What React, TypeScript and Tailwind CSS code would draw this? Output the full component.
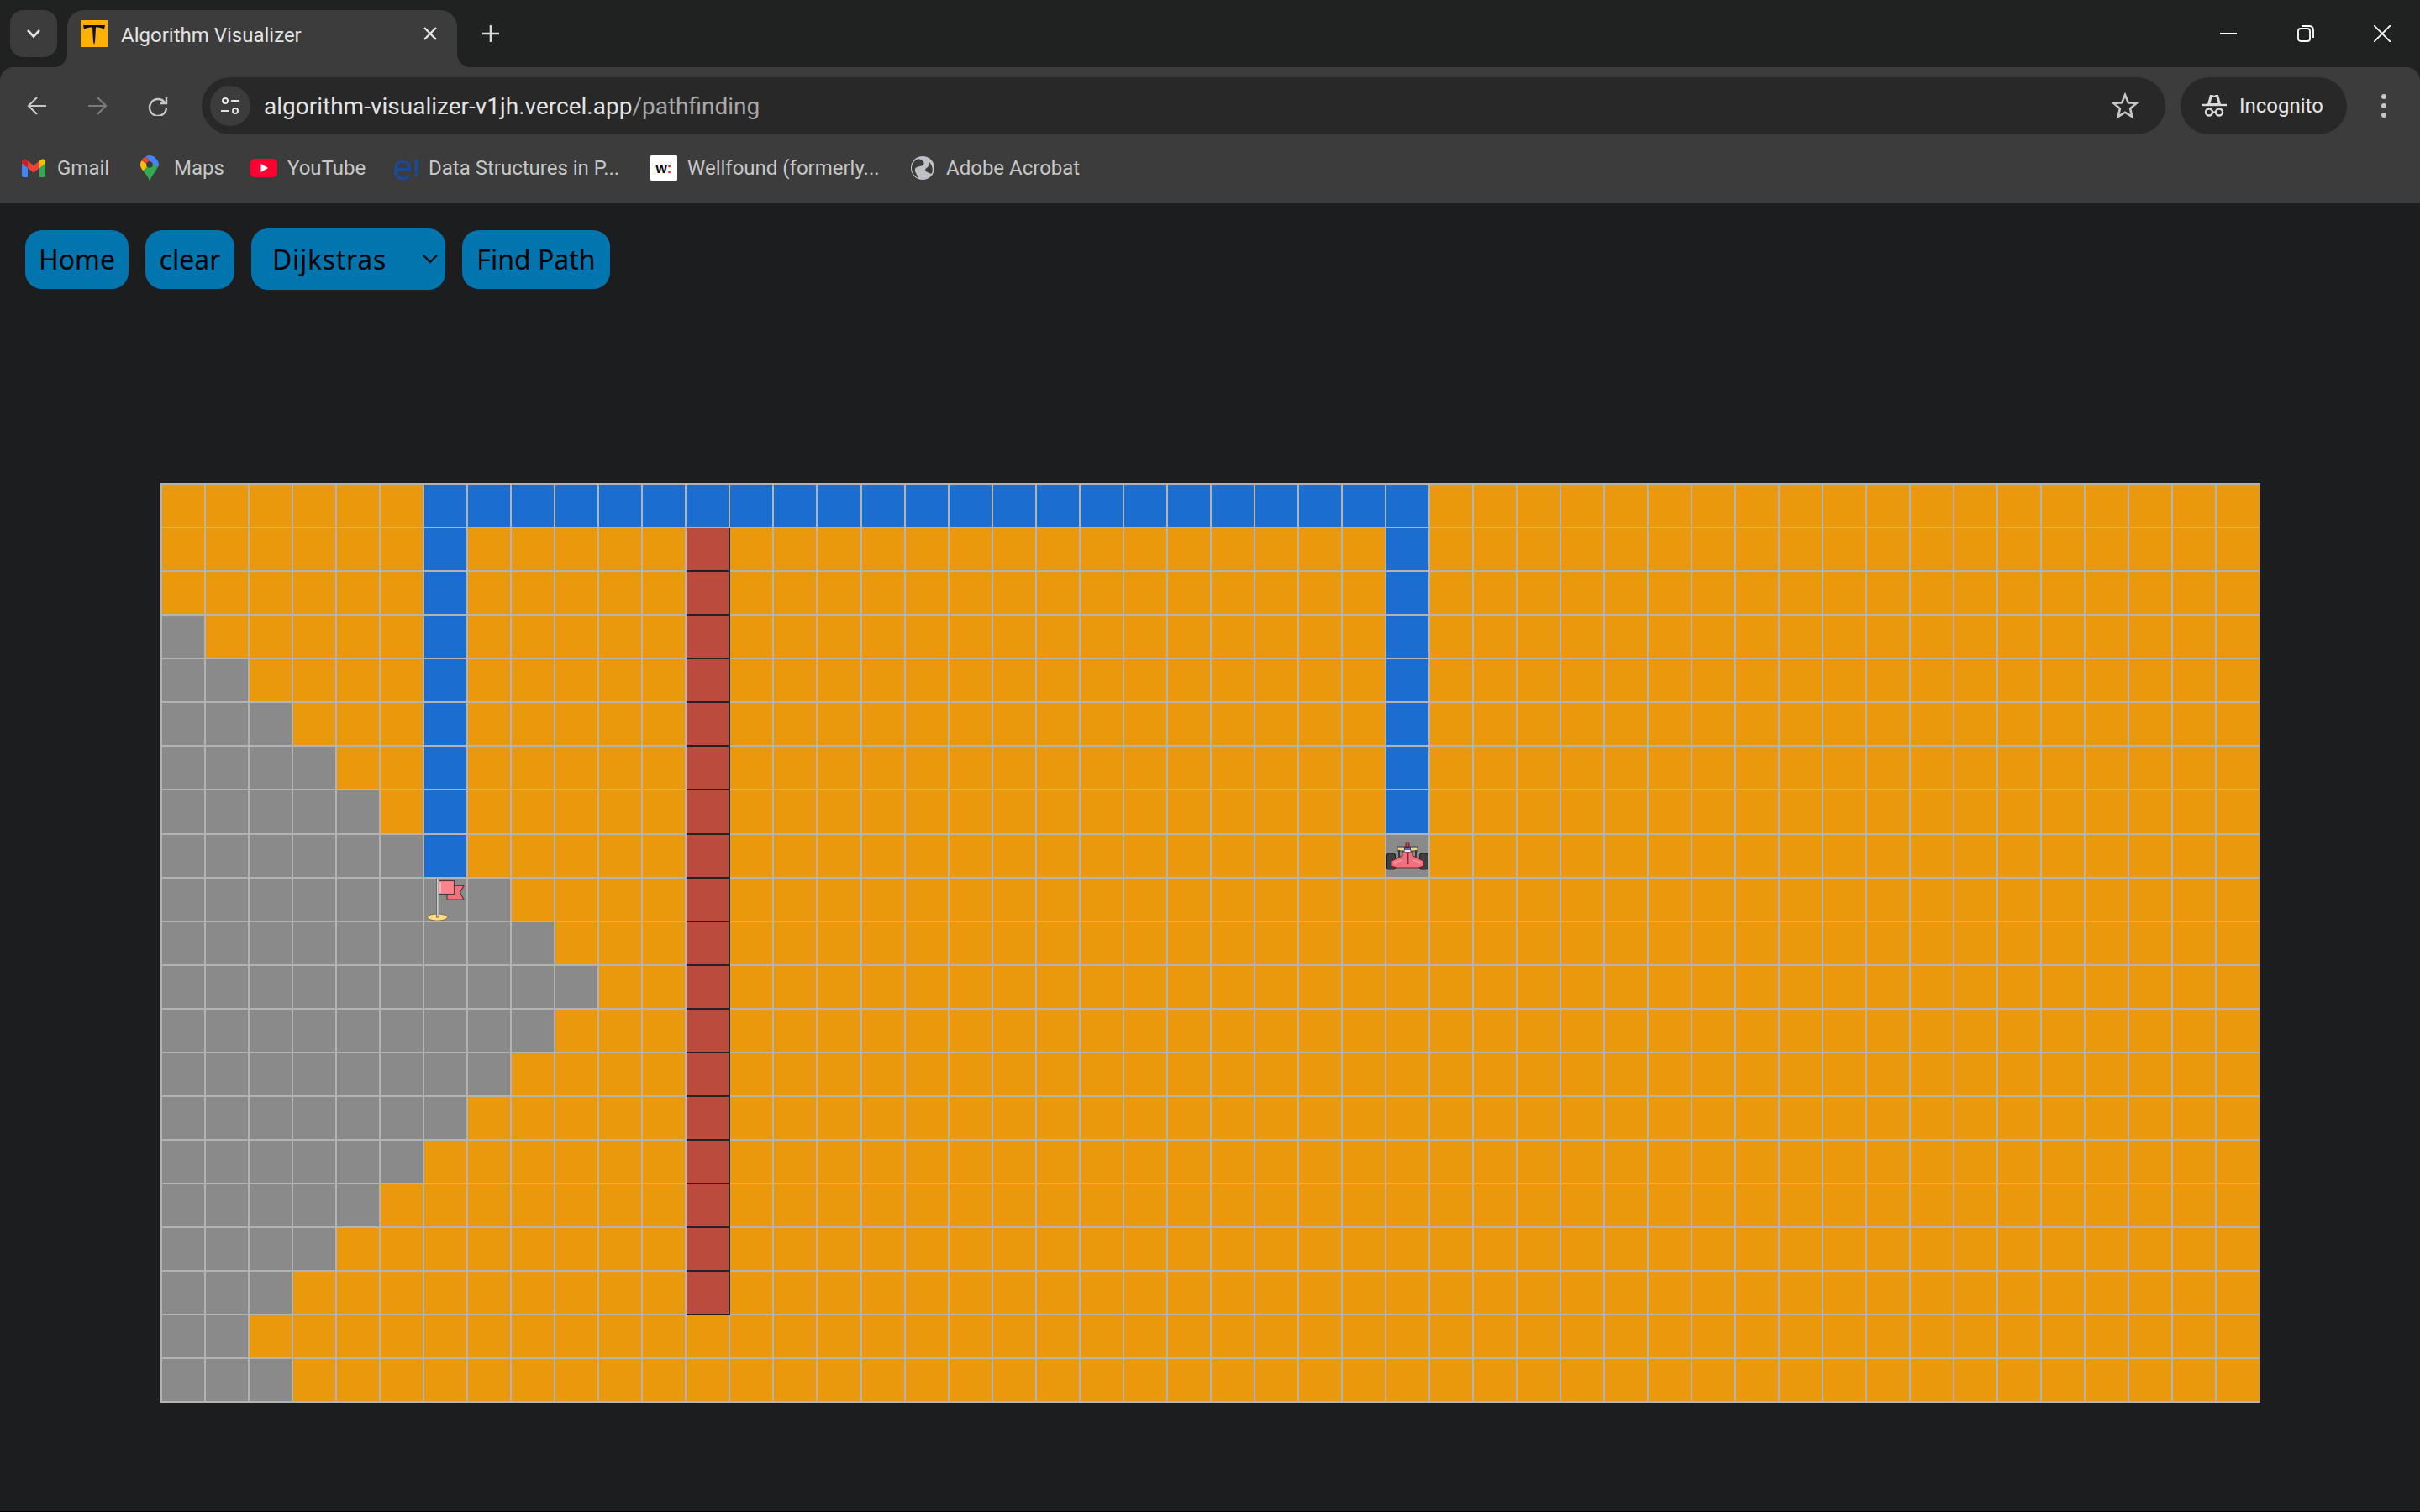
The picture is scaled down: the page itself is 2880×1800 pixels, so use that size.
import React from "react";

const GRAY_COUNT = [0, 0, 0, 1, 2, 3, 4, 5, 6, 8, 9, 10, 9, 8, 7, 6, 5, 4, 3, 2, 3];

function cellClass(r: number, c: number) {
  if (c === 12 && r >= 1 && r <= 18)
    return "bg-[#bb4b3c] shadow-[2px_0_0_#222,0_2px_0_#222,2px_2px_0_#222]";
  if (r === 0 && c >= 6 && c <= 28) return "bg-[#1b6dd0]";
  if (c === 6 && r >= 1 && r <= 8) return "bg-[#1b6dd0]";
  if (c === 28 && r >= 1 && r <= 7) return "bg-[#1b6dd0]";
  if (c === 28 && r === 8) return "bg-[#8a8a8a]";
  if (c < GRAY_COUNT[r]) return "bg-[#8a8a8a]";
  return "bg-[#ea990d]";
}

function Flag() {
  return (
    <svg viewBox="0 0 50 50" className="block h-full w-full">
      <path d="M27 8.5H47L42.5 16.5L47 25H27Z" fill="#f0707c" stroke="#5c3a40" strokeWidth="1.2" />
      <rect x="17" y="2.5" width="18.5" height="16" fill="#ff848c" stroke="#4e3a3e" strokeWidth="1.2" />
      <rect x="18" y="4" width="2" height="13" fill="#ffb0b4" />
      <ellipse cx="15.5" cy="46" rx="12" ry="4" fill="#fbdc80" stroke="#6a6048" strokeWidth="0.8" />
      <rect x="14.5" y="0.5" width="2.6" height="45.5" fill="#c9d0d2" stroke="#4b4f52" strokeWidth="0.7" />
    </svg>
  );
}

function Car() {
  return (
    <svg viewBox="0 0 50 50" className="block h-full w-full">
      <rect x="13" y="14" width="24" height="5" fill="#e6d38a" stroke="#3a3a3a" strokeWidth="1" />
      <rect x="14" y="18" width="2" height="8" fill="#3a3a3a" />
      <rect x="34" y="18" width="2" height="8" fill="#3a3a3a" />
      <rect x="0.5" y="22" width="10" height="19" rx="2.5" fill="#3d3d42" stroke="#1f1f22" strokeWidth="1" />
      <rect x="39.5" y="22" width="10" height="19" rx="2.5" fill="#3d3d42" stroke="#1f1f22" strokeWidth="1" />
      <path d="M6 31L12 28L19 25L19 20H31L31 25L38 28L44 31V37L38 39H31L28 39H22L19 39H12L6 37Z" fill="#f2707e" stroke="#5a2a34" strokeWidth="1" />
      <rect x="21.5" y="14.5" width="7" height="5" fill="#5a68b4" stroke="#2c2c48" strokeWidth="0.8" />
      <rect x="21.5" y="18" width="7" height="2" fill="#e9e9f2" />
      <rect x="23" y="9" width="4" height="5" fill="#c8404c" stroke="#3a2024" strokeWidth="0.8" />
      <path d="M24 22H26.5V35H24Z" fill="#8c2c3c" />
      <path d="M9 33L19 30M41 33L31 30" stroke="#ffa8b0" strokeWidth="1" fill="none" />
    </svg>
  );
}

const bookmarks = [
  { label: "Gmail", w: "w-[141px] gap-[14px]" },
  { label: "Maps", w: "w-[131px] gap-[18px]" },
  { label: "YouTube", w: "w-[170px] gap-[12px]" },
  { label: "Data Structures in P...", w: "w-[306px] gap-[13px]" },
  { label: "Wellfound (formerly...", w: "w-[310px] gap-[12px]" },
  { label: "Adobe Acrobat", w: "w-[220px] gap-[14px]" },
];

function BookmarkIcon({ i }: { i: number }) {
  if (i === 0)
    return (
      <svg viewBox="0 0 28 22" className="h-[22px] w-[28px]">
        <path d="M0 3.5C0 1 3 -.5 5 1L7 2.5V22H2C1 22 0 21 0 20Z" fill="#4285f4" />
        <path d="M28 3.5C28 1 25 -.5 23 1L21 2.5V22H26C27 22 28 21 28 20Z" fill="#34a853" />
        <path d="M7 2.5L14 8L21 2.5V11L14 16.5L7 11Z" fill="#ea4335" />
        <path d="M0 3.5C0 1 3 -.5 5 1L7 2.5V11L0 5.5Z" fill="#c5221f" />
        <path d="M28 3.5C28 1 25 -.5 23 1L21 2.5V11L28 5.5Z" fill="#fbbc04" />
      </svg>
    );
  if (i === 1)
    return (
      <svg viewBox="0 0 22 31" className="h-[31px] w-[22px]">
        <path d="M11 31C9.5 25 6 22 3 18L14 7L21 12C21 17 13 24 11 31Z" fill="#34a853" />
        <path d="M3 18C1 15.5 0 13.5 0 11C0 9 .6 7.5 1.6 6L9 11L7 15Z" fill="#fbbc04" />
        <path d="M1.6 6C2.6 4 4.5 2.4 6.5 1.5L11 6.5L8 9.5Z" fill="#ea4335" />
        <path d="M6.5 1.5C8 .6 9.4 0 11 0C14 0 16.8 1.4 18.5 3.4L13 8.5Z" fill="#4285f4" />
        <path d="M18.5 3.4C20.5 5.5 22 8 22 11C22 12 21.7 13 21 14L13 8.5Z" fill="#4285f4" />
        <circle cx="11" cy="11" r="3.8" fill="#3c3c3c" />
      </svg>
    );
  if (i === 2)
    return (
      <svg viewBox="0 0 32 22" className="h-[22px] w-[32px]">
        <rect width="32" height="22" rx="5" fill="#ff0033" />
        <path d="M12.5 6L21 11L12.5 16Z" fill="#fff" />
      </svg>
    );
  if (i === 3)
    return (
      <span className="flex h-[30px] w-[29px] items-end font-['Liberation_Sans',sans-serif] text-[42px] leading-[30px] text-[#174a9c]">
        e<span className="text-[30px] font-bold leading-[30px]">!</span>
      </span>
    );
  if (i === 4)
    return (
      <span className="flex h-8 w-8 items-center justify-center rounded-[3px] bg-white font-['Liberation_Sans',sans-serif] text-[17px] font-bold leading-none text-black">
        w<span className="text-[#e0242c]">:</span>
      </span>
    );
  return (
    <svg viewBox="0 0 28 28" className="h-7 w-7">
      <circle cx="14" cy="14" r="14" fill="#bdc1c6" />
      <path d="M9 3C14 5 17 7 15 10C13 13 7 11 5 15C4 18 7 21 9 26C5 24 1 20 1 14C1 9 4 5 9 3Z" fill="#3c3c3c" />
      <path d="M21 6C25 10 27 15 25 20C23 22 20 19 18 18C16 16 18 14 20 13C22 11 21 8 21 6Z" fill="#3c3c3c" />
    </svg>
  );
}

export default function App() {
  const rows = Array.from({ length: 21 }, (_, r) => r);
  const cols = Array.from({ length: 48 }, (_, c) => c);
  return (
    <div className="flex h-[1800px] w-[2880px] flex-col overflow-hidden border-b border-black bg-[#1c1d1f] font-['Roboto','Liberation_Sans',sans-serif]">
      <div className="bg-[#202222]">
        {/* Tab strip */}
        <div className="flex h-20 items-start pl-3 pt-3">
          <div className="flex h-14 w-14 items-center justify-center rounded-2xl bg-[#3c3c3c]">
            <svg viewBox="0 0 24 24" className="h-6 w-6" fill="none" stroke="#e3e3e3" strokeWidth="2.6">
              <path d="M5 8L12 15.5L19 8" />
            </svg>
          </div>
          <div className="relative ml-3 flex h-[68px] w-[464px] items-start rounded-t-[20px] bg-[#3c3c3c] pl-4 pt-3">
            <svg viewBox="0 0 16 16" className="absolute bottom-0 -left-4 h-4 w-4">
              <path d="M16 0V16H0C9 16 16 9 16 0Z" fill="#3c3c3c" />
            </svg>
            <svg viewBox="0 0 16 16" className="absolute -right-4 bottom-0 h-4 w-4">
              <path d="M0 0V16H16C7 16 0 9 0 0Z" fill="#3c3c3c" />
            </svg>
            <svg viewBox="0 0 32 32" className="h-8 w-8">
              <rect width="32" height="32" fill="#ffb000" />
              <path d="M3 6H29L28 11C25 9 22 8.5 18 8.5L17 26L16 29L15 26L14 8.5C10 8.5 7 9 4 11Z" fill="#111" />
            </svg>
            <span className="ml-4 mt-[2px] w-[358px] text-[24px] leading-8 text-[#e3e3e3]">Algorithm Visualizer</span>
            <svg viewBox="0 0 20 20" className="mt-[6px] h-5 w-5" fill="none" stroke="#e3e3e3" strokeWidth="2.4">
              <path d="M3 3L17 17M17 3L3 17" />
            </svg>
          </div>
          <svg viewBox="0 0 24 24" className="ml-7 mt-[16px] h-6 w-6" fill="none" stroke="#d8d8d8" strokeWidth="2.6">
            <path d="M12 2V22M2 12H22" />
          </svg>
          <div className="ml-auto flex">
            <div className="flex h-14 w-[92px] items-center justify-center">
              <svg viewBox="0 0 20 20" className="h-5 w-5" fill="none" stroke="#fff" strokeWidth="2"><path d="M0 10H20" /></svg>
            </div>
            <div className="flex h-14 w-[92px] items-center justify-center">
              <svg viewBox="0 0 20 20" className="h-5 w-5" fill="none" stroke="#fff" strokeWidth="1.8">
                <rect x="1" y="4" width="14" height="15" rx="3" />
                <path d="M5 1H14C17 1 19 3 19 6V15" />
              </svg>
            </div>
            <div className="flex h-14 w-[90px] items-center justify-center">
              <svg viewBox="0 0 20 20" className="h-5 w-5" fill="none" stroke="#fff" strokeWidth="1.8"><path d="M0 0L20 20M20 0L0 20" /></svg>
            </div>
          </div>
        </div>
        {/* Toolbar */}
        <div className="h-[162px] rounded-t-[16px] bg-[#3c3c3c]">
          <div className="flex h-[92px] items-start pt-3">
            <div className="flex h-[68px] w-[240px] items-center pl-[32px]">
              <svg viewBox="0 0 24 24" className="h-6 w-6" fill="none" stroke="#c7c7c7" strokeWidth="2.2">
                <path d="M23 12H2M12 2L2 12L12 22" />
              </svg>
              <svg viewBox="0 0 24 24" className="ml-12 h-6 w-6" fill="none" stroke="#7b7b7b" strokeWidth="2.2">
                <path d="M1 12H22M12 2L22 12L12 22" />
              </svg>
              <svg viewBox="0 0 24 24" className="ml-12 h-6 w-6" fill="none" stroke="#c7c7c7" strokeWidth="2.4">
                <path d="M20 8A10 10 0 1 0 22 14" />
                <path d="M22 2V9H15" />
              </svg>
            </div>
            <div className="flex h-[68px] w-[2337px] items-center rounded-[34px] bg-[#282828] pl-[10px]">
              <div className="flex h-12 w-12 items-center justify-center rounded-full bg-[#3c3c3c]">
                <svg viewBox="0 0 24 24" className="h-6 w-6" fill="none" stroke="#e3e3e3" strokeWidth="2">
                  <circle cx="6" cy="6" r="3" />
                  <path d="M13 6H23M1 18H11" />
                  <circle cx="18" cy="18" r="3" />
                </svg>
              </div>
              <span className="ml-4 mt-[2px] text-[28px] leading-none text-[#e3e3e3]">
                algorithm-visualizer-v1jh.vercel.app<span className="text-[#a8a8a8]">/pathfinding</span>
              </span>
              <svg viewBox="0 0 32 32" className="ml-auto mr-[32px] h-8 w-8" fill="none" stroke="#c7c7c7" strokeWidth="2.6">
                <path d="M16 3L19.8 12.2L29.6 12.9L22.1 19.3L24.4 28.9L16 23.7L7.6 28.9L9.9 19.3L2.4 12.9L12.2 12.2Z" />
              </svg>
            </div>
            <div className="ml-[18px] flex h-[68px] w-[198px] items-center rounded-[34px] bg-[#282828] pl-[25px]">
              <svg viewBox="0 0 30 28" className="h-7 w-[30px]" fill="none" stroke="#d8d8d8" strokeWidth="2.4">
                <path d="M0 13H30" />
                <path d="M7 12L10 1H13.5L15 2L16.5 1H20L23 12Z" fill="#d8d8d8" stroke="none" />
                <path d="M10.5 11L12.5 4H17.5L19.5 11Z" fill="#282828" stroke="none" />
                <circle cx="9" cy="21.5" r="4" />
                <circle cx="21" cy="21.5" r="4" />
                <path d="M13 21.5H17" />
              </svg>
              <span className="ml-[15px] text-[24px] leading-none text-[#e3e3e3]">Incognito</span>
            </div>
            <div className="ml-[38px] flex h-[68px] w-3 flex-col items-center justify-center gap-[5px]">
              <span className="h-[6px] w-[6px] rounded-full bg-[#c7c7c7]" />
              <span className="h-[6px] w-[6px] rounded-full bg-[#c7c7c7]" />
              <span className="h-[6px] w-[6px] rounded-full bg-[#c7c7c7]" />
            </div>
          </div>
          <div className="flex h-[56px] items-center pl-[26px]">
            {bookmarks.map((b, i) => (
              <div key={b.label} className={`flex items-center ${b.w}`}>
                <BookmarkIcon i={i} />
                <span className="whitespace-nowrap text-[24px] leading-none text-[#c7c7c7]">{b.label}</span>
              </div>
            ))}
          </div>
        </div>
      </div>

      {/* Page */}
      <div className="flex flex-1 flex-col pl-[30px] pt-[30px]">
        <div className="flex h-[73px] items-center gap-5 font-['Noto_Sans',sans-serif] text-[32px] text-black">
          <button className="h-[70px] w-[123px] rounded-[20px] bg-[#0275ae]">Home</button>
          <button className="h-[70px] w-[106px] rounded-[20px] bg-[#0275ae]">clear</button>
          <div className="relative">
            <select className="block h-[73px] w-[231px] appearance-none rounded-[20px] bg-[#0275ae] pl-[25px] tracking-[0.7px] outline-none" defaultValue="Dijkstras">
              <option>Dijkstras</option>
            </select>
            <svg viewBox="0 0 20 12" className="pointer-events-none absolute right-[8px] top-[30px] h-3 w-5" fill="none" stroke="#111" strokeWidth="2.4">
              <path d="M2 2L10 10L18 2" />
            </svg>
          </div>
          <button className="h-[70px] w-[176px] rounded-[20px] bg-[#0275ae]">Find Path</button>
        </div>
        <div className="ml-[161px] mt-[230px] grid h-[1095px] w-[2499px] grid-cols-[repeat(48,50.032px)] grid-rows-[repeat(21,50.063px)] gap-[2px] bg-[#b3b3b3] p-[2px]">
          {rows.map((r) =>
            cols.map((c) => (
              <div key={`${r}-${c}`} className={cellClass(r, c)}>
                {r === 9 && c === 6 && <Flag />}
                {r === 8 && c === 28 && <Car />}
              </div>
            ))
          )}
        </div>
      </div>
    </div>
  );
}
